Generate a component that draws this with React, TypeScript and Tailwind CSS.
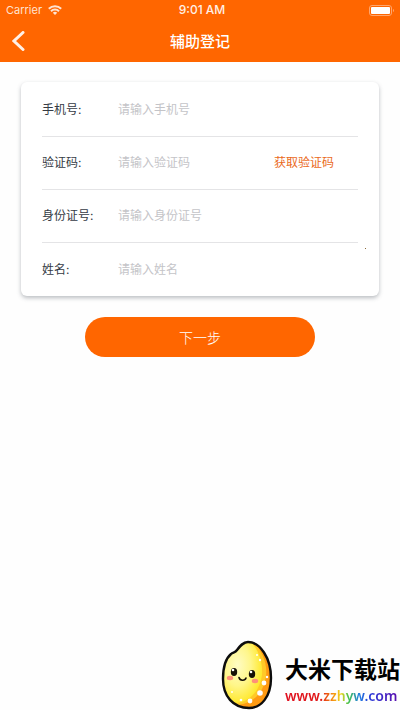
import React from "react";

type Field = {
  id: string;
  label: string;
  placeholder: string;
  action?: string;
};

const fields: Field[] = [
  { id: "phone", label: "手机号:", placeholder: "请输入手机号" },
  { id: "code", label: "验证码:", placeholder: "请输入验证码", action: "获取验证码" },
  { id: "idcard", label: "身份证号:", placeholder: "请输入身份证号" },
  { id: "name", label: "姓名:", placeholder: "请输入姓名" },
];

function StatusBar() {
  return (
    <div className="grid h-5 grid-cols-3 items-center px-1.5 text-[11px] leading-none text-white">
      <div className="flex items-center gap-1.5 text-[#ffe3d1]">
        <span>Carrier</span>
        <svg width="14" height="10" viewBox="0 0 14 10" fill="none" stroke="currentColor" strokeWidth="2">
          <path d="M.8 3.800a8.800 8.800 0 0 1 12.400 0" />
          <path d="M3 6.200a5.700 5.700 0 0 1 8 0" />
          <path d="M7 10 4.800 7.800a3.100 3.100 0 0 1 4.400 0Z" fill="currentColor" stroke="none" />
        </svg>
      </div>
      <span className="pl-1 text-center text-[12px] font-medium text-[#fff0e6]">9:01 AM</span>
      <svg className="justify-self-end" width="25" height="11" viewBox="0 0 25 11">
        <rect x=".5" y=".5" width="22" height="10" rx="2.5" fill="none" stroke="#ffa66e" />
        <rect x="2" y="2" width="19" height="7" rx="1" fill="#fff" />
        <path d="M24 4v3c1-.4 1-2.600 0-3Z" fill="#ffb98e" />
      </svg>
    </div>
  );
}

const eggOutline =
  "M27 2C39 2 50 18 50 38c0 19-10 30-22 30C12 68 2 56 2 39c0-11 2-20 8-25 2-2 4-1 6-4 3-4 6-8 11-8Z";

function Egg() {
  return (
    <svg width="52" height="70" viewBox="0 0 52 70" aria-hidden="true">
      <defs>
        <radialGradient id="shell" cx="0.4" cy="0.4" r="0.65">
          <stop offset="0" stopColor="#fffcc4" />
          <stop offset="0.5" stopColor="#fff68a" />
          <stop offset="1" stopColor="#ffe61e" />
        </radialGradient>
        <clipPath id="egg">
          <path d={eggOutline} />
        </clipPath>
      </defs>
      <g clipPath="url(#egg)">
        <rect width="52" height="70" fill="#ff9a12" />
        <path d="M0 0h30c9 7 17 22 15 36-2 16-12 27-28 29L0 60Z" fill="#ffc928" />
        <path d="M0 0h28c9 8 14 22 13 35-2 15-11 26-25 28L0 58Z" fill="url(#shell)" />
        <circle cx="43" cy="43" r="2.400" fill="#fff" />
        <circle cx="39" cy="53" r="2.800" fill="#fff" />
        <circle cx="29" cy="61" r="2.400" fill="#fff" />
        <circle cx="46" cy="37" r="1.200" fill="#fff" />
        <circle cx="39" cy="20" r="1.200" fill="#fff" />
        <circle cx="36" cy="15" r="1" fill="#fff" />
        <circle cx="20" cy="60" r="1.300" fill="#fff" />
        <circle cx="11" cy="52" r="1" fill="#fff" />
      </g>
      <path d={eggOutline} fill="none" stroke="#0d0d0d" strokeWidth="2.400" />
      <ellipse cx="13" cy="32" rx="3.200" ry="4" fill="#171006" />
      <ellipse cx="31" cy="34" rx="3.200" ry="4" fill="#171006" />
      <circle cx="12" cy="30" r="1.300" fill="#fff" />
      <circle cx="30" cy="32" r="1.300" fill="#fff" />
      <ellipse cx="9" cy="38" rx="3.200" ry="2.200" fill="#ff8f78" />
      <ellipse cx="34" cy="41" rx="3.200" ry="2.200" fill="#ff8f78" />
      <path d="M18 37.500c1 3.500 6 3.500 7 .5" fill="none" stroke="#171006" strokeWidth="1.600" strokeLinecap="round" />
    </svg>
  );
}

export default function App() {
  return (
    <div className="flex min-h-screen flex-col bg-[#fefefe] font-['Inter','Noto_Sans_CJK_SC',sans-serif]">
      <header className="bg-[#ff6600] pb-px text-white">
        <StatusBar />
        <div className="grid h-[41px] grid-cols-[40px_1fr_40px] items-center">
          <button type="button" aria-label="返回" className="flex h-full items-center pl-3">
            <svg width="13" height="20" viewBox="0 0 13 20" fill="none" stroke="#fff0e6" strokeWidth="3" strokeLinecap="round">
              <path d="M11 1.500 2 10l9 8.500" />
            </svg>
          </button>
          <h1 className="pt-1 text-center text-[15px] font-medium">辅助登记</h1>
        </div>
      </header>

      <form className="px-[21px] pt-5" onSubmit={(e) => e.preventDefault()}>
        <div className="relative rounded-md bg-white px-[21px] pt-0.5 shadow-[0_2px_4px_rgba(60,70,80,0.35)]">
          {fields.map((f) => (
            <div key={f.id} className="flex h-[53px] items-center border-b border-[#e4e4e6] text-[12px] last-of-type:border-b-0">
              <label htmlFor={f.id} className="w-[76px] shrink-0 text-[#353b45]">
                {f.label}
              </label>
              <input
                id={f.id}
                type="text"
                placeholder={f.placeholder}
                className="w-0 min-w-0 flex-1 bg-transparent outline-none placeholder:text-[#c4c4c8]"
              />
              {f.action && (
                <button type="button" className="mr-6 text-[#ea6a1c]">
                  {f.action}
                </button>
              )}
            </div>
          ))}
          <span className="absolute right-[13px] bottom-[47px] size-px bg-[#8a6a3a]" />
        </div>
        <div className="flex justify-center pt-[21px]">
          <button type="submit" className="h-10 w-[230px] rounded-full bg-[#ff6600] text-[14px] font-light text-white">
            下一步
          </button>
        </div>
      </form>

      <footer className="mt-auto flex items-end justify-end gap-3">
        <Egg />
        <div className="flex flex-col pb-1">
          <span className="font-['Noto_Sans_CJK_SC',sans-serif] text-[23px] leading-9 font-bold text-black">大米下载站</span>
          <a
            href="#home"
            className="self-start bg-[linear-gradient(90deg,#e01020_0%,#e01818_32%,#f58a10_42%,#f0d820_50%,#40c050_57%,#2080e0_66%,#2838d8_76%,#5a10b0_100%)] bg-clip-text font-['Noto_Sans',sans-serif] text-[14px] leading-5 font-semibold text-transparent"
          >
            www.zzhyw.com
          </a>
        </div>
      </footer>
    </div>
  );
}
